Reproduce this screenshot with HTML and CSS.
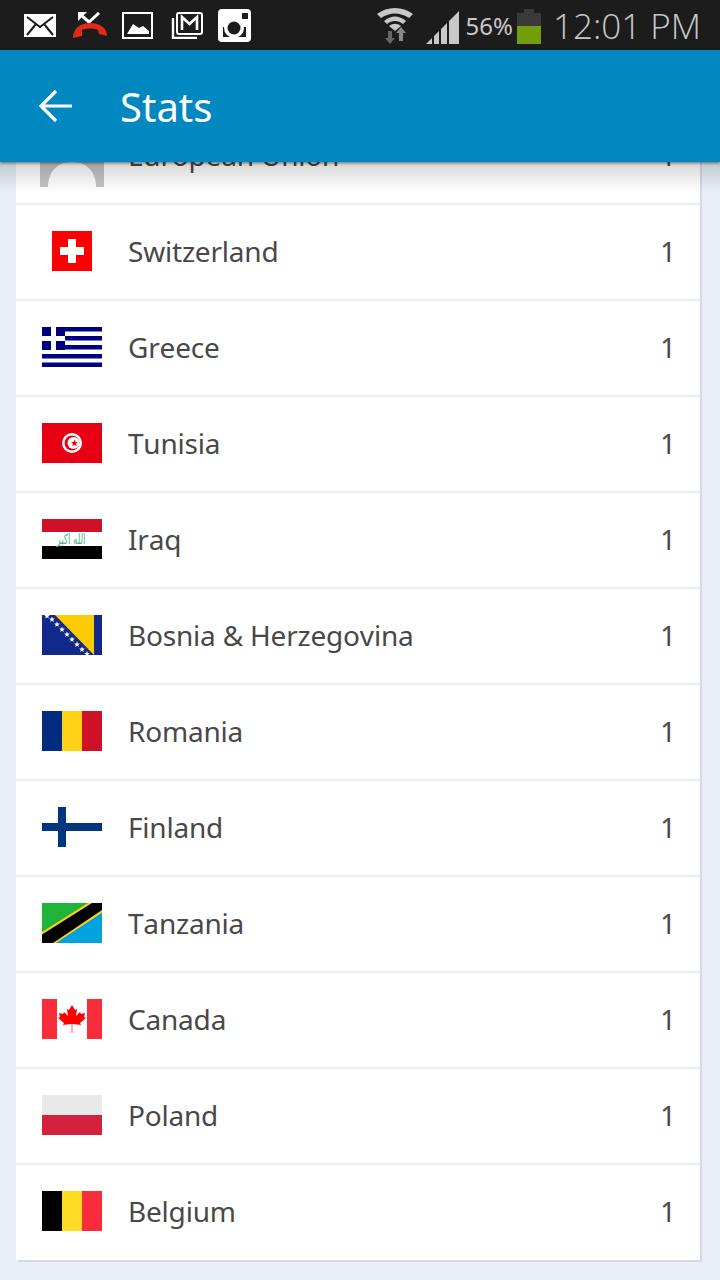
FILE: index.html
```html
<!DOCTYPE html>
<html lang="en">
<head>
  <meta charset="UTF-8">
  <title>Stats</title>
  <link rel="stylesheet" href="styles.css">
</head>
<body>
  <div class="statusbar">
    <div class="status-left">
      <svg width="32" height="23" viewBox="0 0 32 23"><rect width="32" height="23" fill="#fff"/><path d="M3 3 16 13 29 3M3 21 12 10M29 21 20 10" fill="none" stroke="#1c1c1c" stroke-width="2"/></svg>
      <svg class="ic-call" width="34" height="26" viewBox="0 0 34 26"><path d="M26 1 16 10 9 4" fill="none" stroke="#fff" stroke-width="3"/><path d="M5 0H14L5 9z" fill="#fff"/><path d="M0 26C0 16 8 11 17 11S34 15 34 24L26 22 25 18C21 16 13 16 9 18L9 24z" fill="#e02c14"/></svg>
      <svg width="31" height="27" viewBox="0 0 31 27"><rect x="1" y="1" width="29" height="25" fill="#1c1c1c" stroke="#fff" stroke-width="2"/><path d="M5 22 11 12 17 16 21 14 27 19V22z" fill="#fff"/></svg>
      <svg class="ic-mail" width="32" height="27" viewBox="0 0 32 27"><path d="M2 6V26H26" fill="none" stroke="#fff" stroke-width="2.400"/><rect x="6" y="1" width="25" height="21" rx="2" fill="#1c1c1c" stroke="#fff" stroke-width="2"/><path d="M11 18V5L18.500 12 26 5V18" fill="none" stroke="#fff" stroke-width="2.600"/></svg>
      <svg width="33" height="33" viewBox="0 0 33 33"><rect width="33" height="33" rx="4" fill="#fff"/><rect x="24" y="4" width="6" height="6" fill="#1c1c1c"/><rect x="5" y="18" width="23" height="10" fill="#1c1c1c"/><circle cx="16" cy="19" r="10" fill="#fff"/><circle cx="16" cy="19" r="6.500" fill="#1c1c1c"/></svg>
    </div>
    <div class="status-right">
      <svg class="wifi" width="36" height="36" viewBox="0 0 36 36"><path d="M0 6C10-2 26-2 36 6L32 10C23 4 13 4 4 10z" fill="#c8c8c8"/><path d="M7 13C14 7 22 7 29 13L26 16C21 12 15 12 10 16z" fill="#c8c8c8"/><path d="M12 18C16 15 20 15 24 18L18 23z" fill="#c8c8c8"/><path d="M11 23H15V30H18L13 36 8 30H11z" fill="#666"/><path d="M24 19 29 25H26V33H22V25H19z" fill="#888"/></svg>
      <svg class="signal" width="34" height="34" viewBox="0 0 34 34"><path d="M0 33 6 27V33zM8 25 13 20V33H8zM15 18 21 12V33H15zM23 10 33 0V33H23z" fill="#c8c8c8"/></svg>
      <span class="pct">56%</span>
      <div class="battery"><div class="battery-cap"></div><div class="battery-body"><div class="battery-level"></div></div></div>
      <span class="clock">12:01 PM</span>
    </div>
  </div>

  <header class="appbar">
    <svg class="back" width="36" height="36" viewBox="0 0 36 36"><path d="M2 18H33M17 3 2 18 17 33" fill="none" stroke="#fff" stroke-width="3.200"/></svg>
    <h1 class="title">Stats</h1>
  </header>

  <main class="content">
    <ul class="card">
      <li class="row">
        <svg class="flag flag-tall" width="64" height="64" viewBox="0 0 64 64"><rect width="64" height="64" fill="#c4c4c4"/><path d="M8 64C8 50 16 39 32 39S56 50 56 64z" fill="#fff"/></svg>
        <span class="name">European Union</span><span class="count">1</span>
      </li>
      <li class="row">
        <svg class="flag" width="60" height="40" viewBox="0 0 60 40"><rect x="10" width="40" height="40" fill="#f00"/><path d="M18 16H26V8H34V16H42V24H34V32H26V24H18z" fill="#fff"/></svg>
        <span class="name">Switzerland</span><span class="count">1</span>
      </li>
      <li class="row">
        <svg class="flag" width="60" height="40" viewBox="0 0 60 40"><path d="M0 0H60V4.500H0zM23 9H60V13.500H23zM23 18H60V22.500H23zM0 27H60V31.500H0zM0 35.500H60V40H0z" fill="#000080"/><path d="M0 0H23V23H0z" fill="#000080"/><path d="M9 0H14V23H9zM0 9H23V14H0z" fill="#fff"/></svg>
        <span class="name">Greece</span><span class="count">1</span>
      </li>
      <li class="row">
        <svg class="flag" width="60" height="40" viewBox="0 0 60 40"><rect width="60" height="40" fill="#e70013"/><circle cx="30" cy="20" r="10" fill="#fff"/><circle cx="30" cy="20" r="7.500" fill="#e70013"/><circle cx="31.500" cy="20" r="6" fill="#fff"/><path d="M32.500 16.500 33.500 19 36 19 34 20.800 34.800 23.300 32.500 21.800 30.200 23.300 31 20.800 29 19 31.500 19z" fill="#e70013"/></svg>
        <span class="name">Tunisia</span><span class="count">1</span>
      </li>
      <li class="row">
        <svg class="flag" width="60" height="40" viewBox="0 0 60 40"><rect width="60" height="13" fill="#ce1126"/><rect y="13" width="60" height="14" fill="#fff"/><rect y="27" width="60" height="13" fill="#000"/><text class="takbir" x="29" y="25" textLength="29" lengthAdjust="spacingAndGlyphs">الله اكبر</text></svg>
        <span class="name">Iraq</span><span class="count">1</span>
      </li>
      <li class="row">
        <svg class="flag" width="60" height="40" viewBox="0 0 60 40">
          <defs><path id="star" d="M0-3 .8-.9 2.900-.9 1.200.4 1.800 2.500 0 1.300-1.800 2.500-1.200.4-2.900-.9-.8-.9z" fill="#fff"/></defs>
          <rect width="60" height="40" fill="#12288a"/><path d="M13 0H52V40z" fill="#fecb00"/>
          <use href="#star" x="5" y="1"/><use href="#star" x="10" y="4.500"/><use href="#star" x="15" y="9.500"/><use href="#star" x="20" y="14.500"/><use href="#star" x="25" y="19.500"/><use href="#star" x="30" y="24.500"/><use href="#star" x="35" y="29.500"/><use href="#star" x="40" y="34.500"/><use href="#star" x="45" y="39"/>
        </svg>
        <span class="name">Bosnia &amp; Herzegovina</span><span class="count">1</span>
      </li>
      <li class="row">
        <svg class="flag" width="60" height="40" viewBox="0 0 60 40"><rect width="20" height="40" fill="#002b7f"/><rect x="20" width="20" height="40" fill="#fcd116"/><rect x="40" width="20" height="40" fill="#ce1126"/></svg>
        <span class="name">Romania</span><span class="count">1</span>
      </li>
      <li class="row">
        <svg class="flag" width="60" height="40" viewBox="0 0 60 40"><path d="M16 0H24V16H60V24H24V40H16V24H0V16H16z" fill="#003580"/></svg>
        <span class="name">Finland</span><span class="count">1</span>
      </li>
      <li class="row">
        <svg class="flag" width="60" height="40" viewBox="0 0 60 40"><rect width="60" height="40" fill="#1eb53a"/><path d="M60 40H0L60 0z" fill="#00a3dd"/><path d="M0 29 46 0H60V9.700L14 40H0z" fill="#fcd116"/><path d="M0 31.500 50 0H60V7L11 40H0z" fill="#000"/></svg>
        <span class="name">Tanzania</span><span class="count">1</span>
      </li>
      <li class="row">
        <svg class="flag" width="60" height="40" viewBox="0 0 60 40"><rect width="60" height="40" fill="#fff"/><rect width="15" height="40" fill="#f92c3b"/><rect x="45" width="15" height="40" fill="#f92c3b"/><path d="M29.300 25H30.700V34H29.300z" fill="#f88"/><path d="M30 6 33 11 35 10 34 17 38 13 39 15 43 14 42 18 44 19 38 24 39 26 31 25H29L21 26 22 24 16 19 18 18 17 14 21 15 22 13 26 17 25 10 27 11z" fill="#f00"/></svg>
        <span class="name">Canada</span><span class="count">1</span>
      </li>
      <li class="row">
        <svg class="flag" width="60" height="40" viewBox="0 0 60 40"><rect width="60" height="20" fill="#e9e9e9"/><rect y="20" width="60" height="20" fill="#d4213d"/></svg>
        <span class="name">Poland</span><span class="count">1</span>
      </li>
      <li class="row">
        <svg class="flag" width="60" height="40" viewBox="0 0 60 40"><rect width="20" height="40" fill="#000"/><rect x="20" width="20" height="40" fill="#fdda24"/><rect x="40" width="20" height="40" fill="#f92c3b"/></svg>
        <span class="name">Belgium</span><span class="count">1</span>
      </li>
    </ul>
  </main>
</body>
</html>
```

FILE: styles.css
```css
* {
  box-sizing: border-box;
}

html, body {
  margin: 0;
  padding: 0;
}

body {
  width: 720px;
  height: 1280px;
  overflow: hidden;
  background-color: #e8eff7;
  font-family: "Noto Sans", "Open Sans", sans-serif;
  color: #484848;
}

/* barra de estado */
.statusbar {
  height: 50px;
  background-color: #1c1c1c;
  display: flex;
  justify-content: space-between;
  align-items: center;
  padding: 0 19px 0 24px;
  overflow: hidden;
}

.status-left,
.status-right {
  display: flex;
  align-items: center;
}

.status-left {
  gap: 15px;
}

.ic-call {
  margin-left: 2px;
}

.ic-mail {
  margin-left: 3px;
}

.status-right {
  color: #c8c8c8;
}

.wifi {
  margin-top: 1px;
  margin-right: 13px;
}

.signal {
  margin-top: 5px;
  margin-right: 6px;
}

.pct {
  font-size: 24px;
  margin-right: 4px;
}

.battery {
  width: 24px;
  height: 35px;
  margin-top: 3px;
  display: flex;
  flex-direction: column;
  align-items: center;
  margin-right: 12px;
}

.battery-cap {
  width: 10px;
  height: 4px;
  background-color: #3a3a3a;
}

.battery-body {
  width: 24px;
  height: 31px;
  background-color: #3a3a3a;
  display: flex;
  align-items: flex-end;
}

.battery-level {
  width: 100%;
  height: 18px;
  background-color: #739e0b;
}

.clock {
  font-family: "Open Sans", sans-serif;
  font-weight: 300;
  font-size: 35px;
}

/* barra superior */
.appbar {
  position: relative;
  z-index: 2;
  height: 112px;
  background-color: #0288c0;
  display: flex;
  align-items: center;
  padding-left: 39px;
  box-shadow: 0 1px 3px rgba(0, 0, 0, 0.5);
}

.back {
  margin-right: 45px;
}

.title {
  margin: 0;
  font-size: 40px;
  font-weight: 400;
  color: #fff;
}

/* lista de paises */
.content {
  height: 1118px;
  overflow: hidden;
  position: relative;
}

.content::before {
  content: "";
  position: absolute;
  z-index: 1;
  left: 0;
  right: 0;
  top: 0;
  height: 30px;
  background: linear-gradient(rgba(0, 0, 0, 0.16), rgba(0, 0, 0, 0));
}

.card {
  list-style: none;
  margin: -53px 20px 0 16px;
  padding: 0;
  background-color: #fff;
  box-shadow: 2px 2px 0 #d9d9d9;
}

.row {
  height: 96px;
  display: flex;
  align-items: center;
  padding: 0 24px 2px 26px;
  border-bottom: 2px solid #e8eff7;
}

.row:last-child {
  height: 95px;
  padding-bottom: 3px;
  border-bottom: none;
}

.flag {
  flex: none;
  margin-right: 26px;
}

.flag-tall {
  margin-left: -2px;
  margin-right: 24px;
}

.takbir {
  font-family: "DejaVu Sans", sans-serif;
  font-size: 14px;
  fill: #3fb483;
  text-anchor: middle;
}

.name {
  flex: 1;
  font-size: 28px;
  letter-spacing: -0.2px;
  font-kerning: none;
}

.count {
  font-size: 28px;
}
```
